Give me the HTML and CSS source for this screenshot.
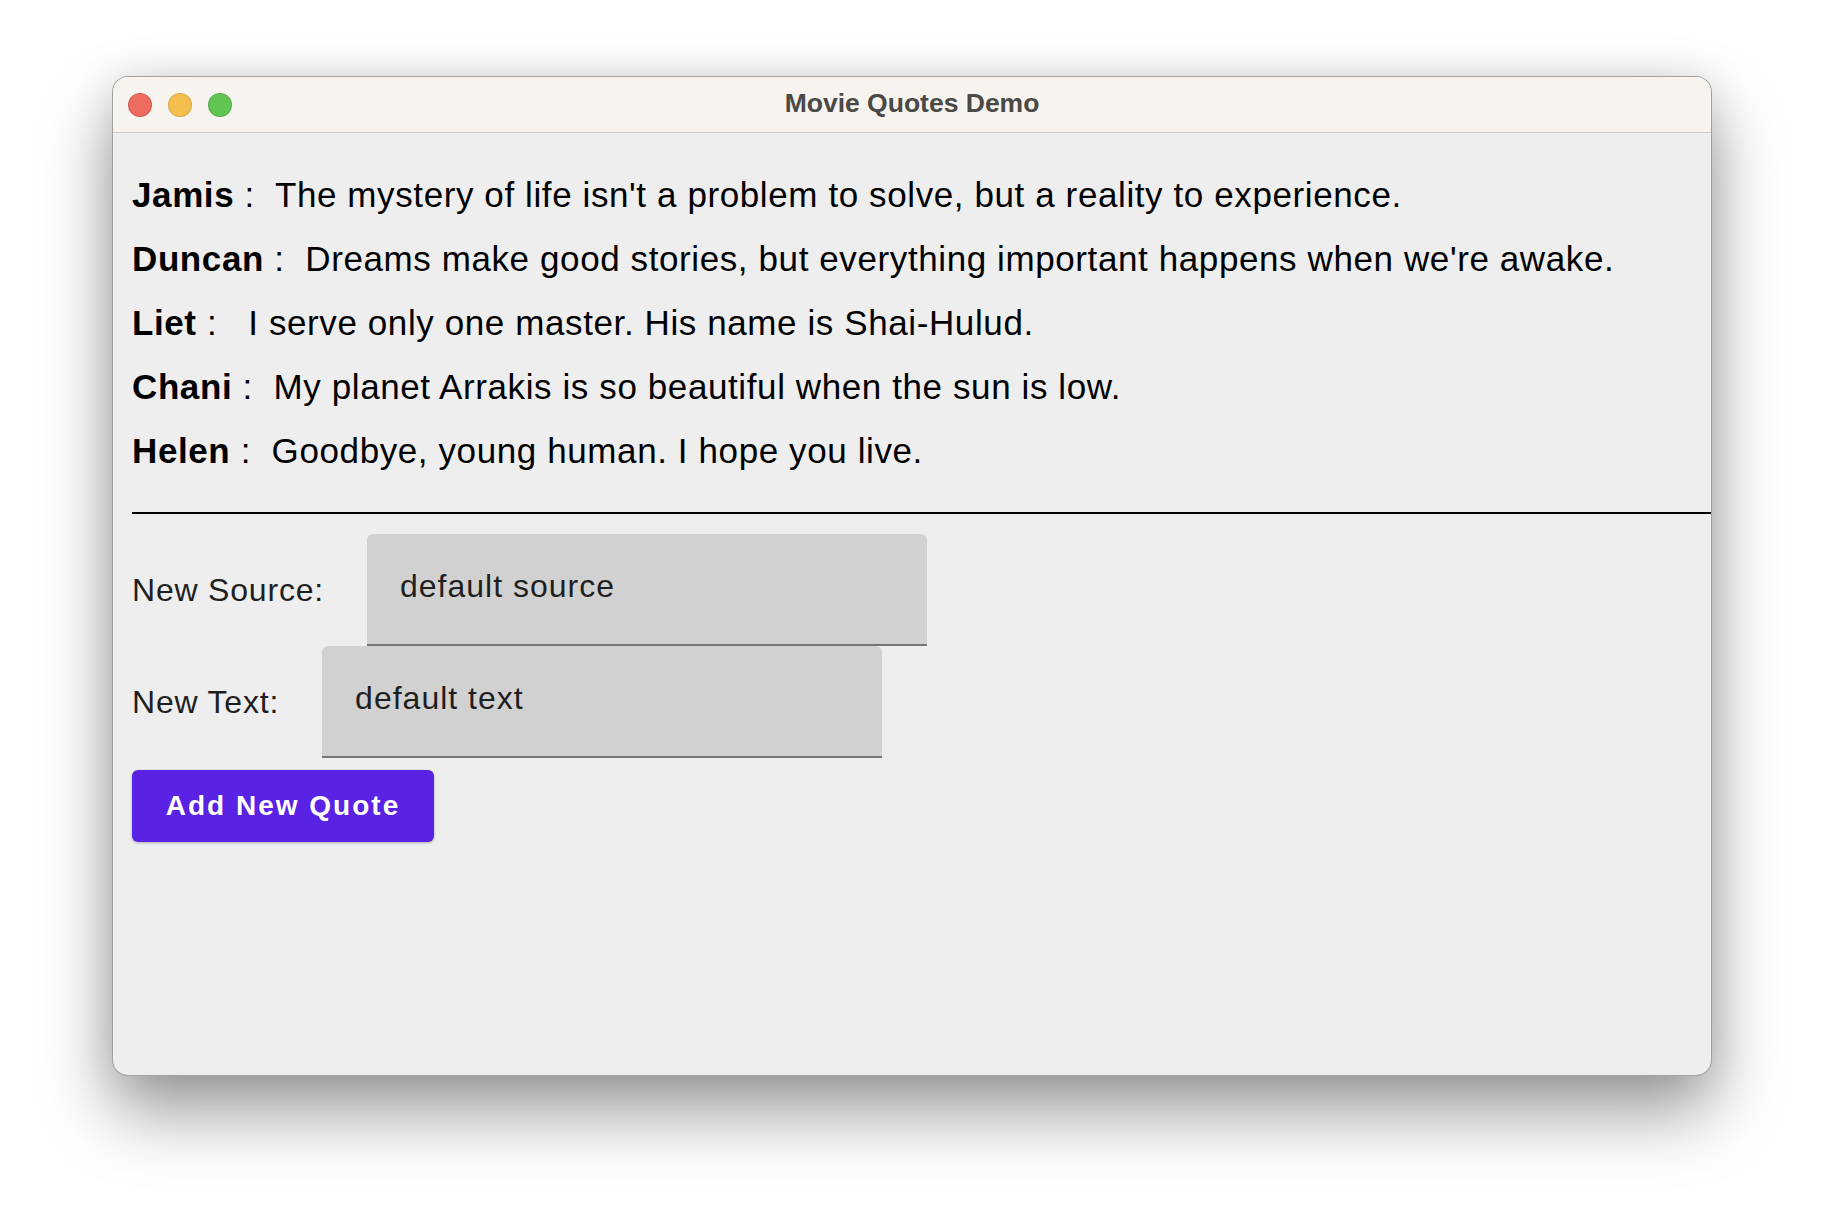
FILE: index.html
```html
<!DOCTYPE html>
<html lang="en">
<head>
<meta charset="utf-8">
<title>Movie Quotes Demo</title>
<link rel="stylesheet" href="styles.css">
</head>
<body>
<div class="window">
  <div class="titlebar">
    <div class="lights">
      <span class="light red"></span>
      <span class="light yellow"></span>
      <span class="light green"></span>
    </div>
    <div class="title">Movie Quotes Demo</div>
    <div class="spacer"></div>
  </div>
  <div class="content">
    <div class="quotes">
      <p class="quote"><b class="source">Jamis</b> :  The mystery of life isn't a problem to solve, but a reality to experience.</p>
      <p class="quote"><b class="source">Duncan</b> :  Dreams make good stories, but everything important happens when we're awake.</p>
      <p class="quote"><b class="source">Liet</b> :   I serve only one master. His name is Shai-Hulud.</p>
      <p class="quote"><b class="source">Chani</b> :  My planet Arrakis is so beautiful when the sun is low.</p>
      <p class="quote"><b class="source">Helen</b> :  Goodbye, young human. I hope you live.</p>
    </div>
    <div class="divider"></div>
    <div class="form">
      <div class="field">
        <span class="label">New Source:</span>
        <div class="input">default source</div>
      </div>
      <div class="field">
        <span class="label">New Text:</span>
        <div class="input">default text</div>
      </div>
      <button class="add-button" type="button">Add New Quote</button>
    </div>
  </div>
</div>
</body>
</html>
```
FILE: styles.css
```css
html, body {
  margin: 0;
  padding: 0;
  background: #ffffff;
}

html {
  height: 100%;
}

body {
  box-sizing: border-box;
  min-height: 1224px;
  font-family: "Liberation Sans", Arial, sans-serif;
  padding: 76px 0 0 112px;
}

.window {
  box-sizing: border-box;
  width: 1600px;
  height: 1000px;
  border: 1px solid rgba(0, 0, 0, 0.32);
  border-radius: 16px;
  background: #eeeeee;
  overflow: hidden;
  display: flex;
  flex-direction: column;
  box-shadow: 0 36px 70px rgba(0, 0, 0, 0.40), 0 0 40px rgba(0, 0, 0, 0.10);
}

.titlebar {
  height: 55px;
  flex: 0 0 55px;
  background: #f7f3ee;
  border-bottom: 1px solid #cfcbc6;
  display: grid;
  grid-template-columns: 1fr auto 1fr;
  align-items: center;
}

.lights {
  display: flex;
  gap: 16px;
  padding-left: 15px;
}

.light {
  width: 24px;
  height: 24px;
  border-radius: 50%;
  box-sizing: border-box;
  border: 1px solid rgba(0, 0, 0, 0.12);
}

.red { background: #ee6b60; }
.yellow { background: #f5bf4f; }
.green { background: #61c554; }

.title {
  font-weight: bold;
  font-size: 26.5px;
  color: #4b4946;
  line-height: 30px;
  padding-bottom: 4px;
}

.content {
  flex: 1;
  padding: 30px 0 0 19px;
}

.quotes {
  padding-right: 20px;
}

.quote {
  margin: 0;
  font-size: 35px;
  letter-spacing: 0.6px;
  line-height: 64px;
  color: #000000;
  white-space: pre;
}

.source {
  font-weight: bold;
}

.divider {
  height: 2px;
  background: #000000;
  margin-top: 29px;
}

.form {
  margin-top: 20px;
  display: flex;
  flex-direction: column;
  align-items: flex-start;
}

.field {
  display: flex;
  align-items: center;
}

.label {
  font-size: 32px;
  letter-spacing: 0.8px;
  color: #1f1f1f;
  margin-right: 43px;
}

.input {
  box-sizing: border-box;
  width: 560px;
  height: 112px;
  background: #d1d1d1;
  border-bottom: 2px solid #767676;
  border-radius: 6px 6px 0 0;
  padding: 32px 0 0 33px;
  font-size: 32px;
  line-height: 40px;
  letter-spacing: 1px;
  color: #1f1f1f;
}

.add-button {
  margin-top: 12px;
  width: 302px;
  height: 72px;
  border: none;
  border-radius: 6px;
  background: #5a22e4;
  color: #ffffff;
  font-family: "Liberation Sans", Arial, sans-serif;
  font-weight: bold;
  font-size: 28px;
  letter-spacing: 2px;
  padding: 0;
  box-shadow: 0 1px 3px rgba(0, 0, 0, 0.25);
}
```
